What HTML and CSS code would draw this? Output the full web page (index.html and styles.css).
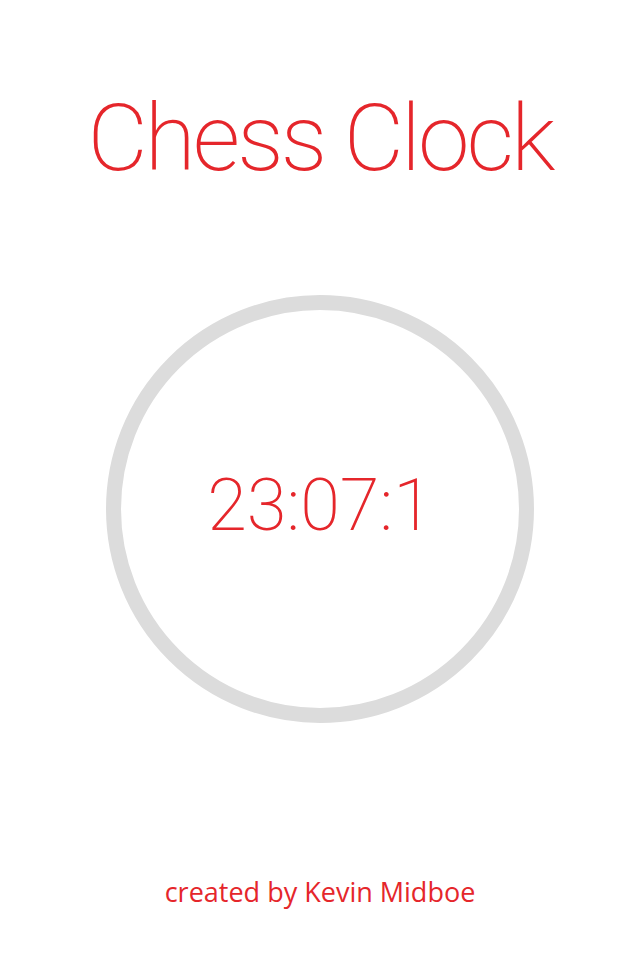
FILE: index.html
```html
<!DOCTYPE html>
<html>
<head>
<meta charset="utf-8">
<link rel="stylesheet" href="styles.css">
</head>
<body>
<main class="screen">
  <h1 class="title">Chess Clock</h1>
  <div class="dial">
    <span class="time">23:07:1</span>
  </div>
  <p class="credit">created by Kevin Midboe</p>
</main>
</body>
</html>
```
FILE: styles.css
```css
html, body {
  margin: 0;
  padding: 0;
  background: #ffffff;
}
.screen {
  width: 640px;
  height: 960px;
  display: flex;
  flex-direction: column;
  align-items: center;
  color: #e5262b;
}
.title {
  margin: 92px 0 0;
  font-family: "Roboto", "Liberation Sans", sans-serif;
  font-weight: 200;
  font-size: 93px;
  line-height: 1;
  letter-spacing: -3px;
}
.dial {
  margin-top: 110px;
  width: 428px;
  height: 428px;
  box-sizing: border-box;
  border: 15px solid #dcdcdc;
  border-radius: 50%;
  display: flex;
  align-items: center;
  justify-content: center;
}
.time {
  font-family: "Roboto", "Liberation Sans", sans-serif;
  font-weight: 200;
  font-size: 72px;
  line-height: 1;
  margin-top: -6px;
}
.credit {
  margin: 155px 0 0;
  font-family: "Open Sans", "Liberation Sans", sans-serif;
  font-size: 27px;
  line-height: 1;
}
```
